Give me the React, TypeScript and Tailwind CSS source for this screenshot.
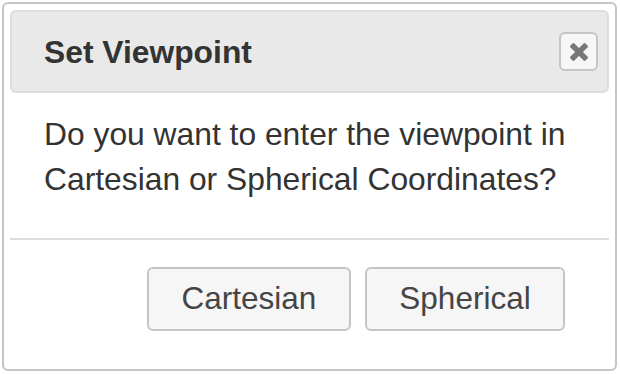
const font = { fontFamily: '"Liberation Sans", Arial, sans-serif' };

const DialogButton = ({ label, width }: { label: string; width: string }) => (
  <button
    className={`${width} h-[64px] rounded-[6px] border-2 border-[#c5c5c5] bg-[#f6f6f6] text-[31.5px] leading-none text-[#454545]`}
    style={font}
  >
    {label}
  </button>
);

const App: React.FC = () => {
  return (
    <div className="w-[620px] h-[374px] bg-white pt-[2px] pl-[2px]" style={font}>
      <div className="w-[615px] h-[369px] rounded-[6px] border-2 border-[#c5c5c5] p-[6px] flex flex-col">
        {/* title bar */}
        <div className="h-[83px] rounded-[6px] border-2 border-[#dddddd] bg-[#e9e9e9] flex items-center justify-between pl-[32px] pr-[9px]">
          <span className="text-[31.8px] font-bold text-[#333333] leading-[40px]">Set Viewpoint</span>
          <button className="w-[39px] h-[39px] rounded-[6px] border-2 border-[#c5c5c5] bg-[#f6f6f6] flex items-center justify-center">
            <svg width="18" height="18" viewBox="0 0 18 18">
              <path d="M3.5 3.5 L14.5 14.5 M14.5 3.5 L3.5 14.5" stroke="#777777" strokeWidth="5.5" strokeLinecap="square" />
            </svg>
          </button>
        </div>

        {/* content */}
        <div className="pl-[34px] pt-[19px] pr-[20px] h-[145px]">
          <p className="text-[31.8px] leading-[44.5px] text-[#333333]">
            Do you want to enter the viewpoint in
            <br />
            Cartesian or Spherical Coordinates?
          </p>
        </div>

        {/* button pane */}
        <div className="border-t-2 border-[#dddddd] flex justify-end gap-[14px] pt-[27px] pr-[44px]">
          <DialogButton label="Cartesian" width="w-[204px]" />
          <DialogButton label="Spherical" width="w-[200px]" />
        </div>
      </div>
    </div>
  );
};

export default App;
